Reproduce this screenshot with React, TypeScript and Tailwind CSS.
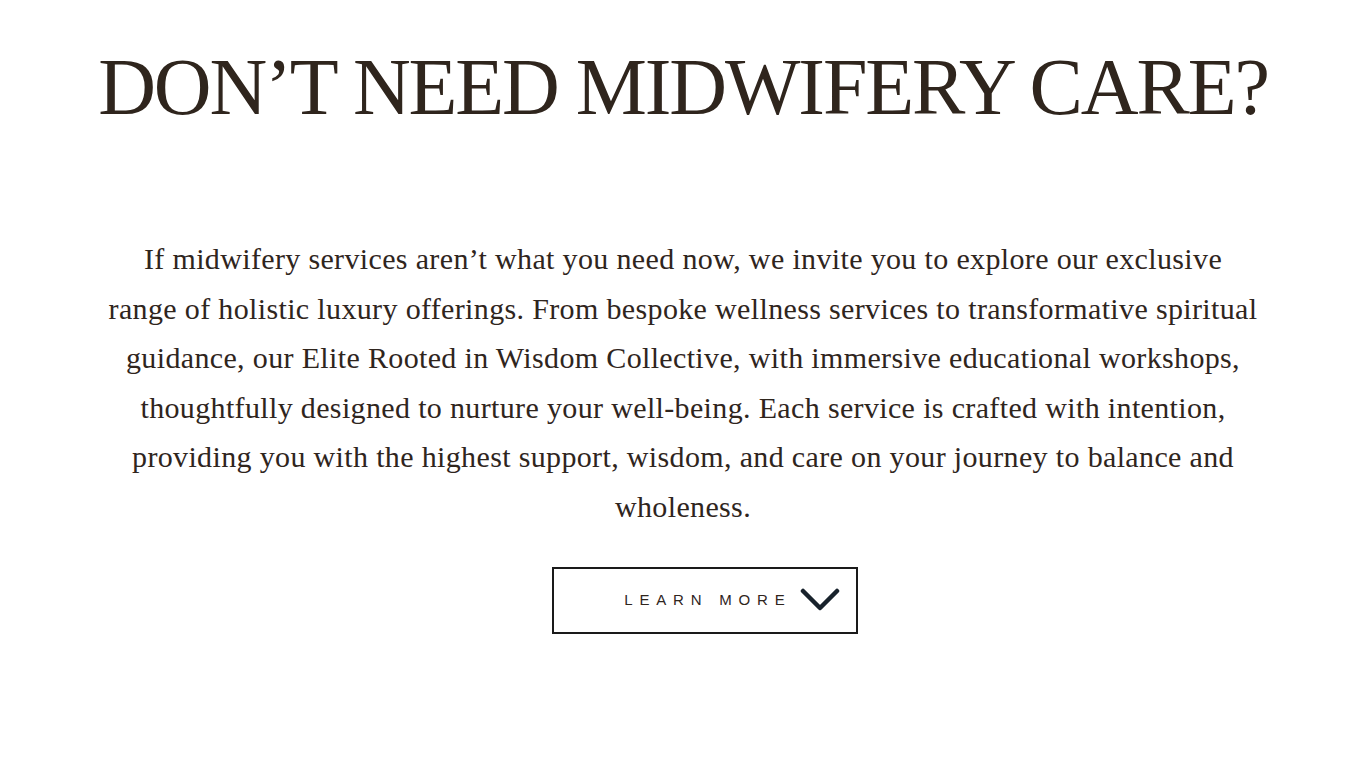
import React from "react";

const lines = [
    "If midwifery services aren’t what you need now, we invite you to explore our exclusive",
    "range of holistic luxury offerings. From bespoke wellness services to transformative spiritual",
    "guidance, our Elite Rooted in Wisdom Collective, with immersive educational workshops,",
    "thoughtfully designed to nurture your well-being. Each service is crafted with intention,",
    "providing you with the highest support, wisdom, and care on your journey to balance and",
    "wholeness.",
];

export default function App() {
    return (
        <div className="min-h-[768px] w-full bg-white flex flex-col items-center text-[#2f251d]">
            <h1 className="mt-[37px] text-[80px] leading-[100px] font-['Liberation_Serif',serif] tracking-[-2.1px] whitespace-nowrap">
                DON’T NEED MIDWIFERY CARE?
            </h1>
            <p className="mt-[97px] text-center text-[30px] leading-[49.6px] tracking-[0.35px] font-['Liberation_Serif',serif]">
                {lines.map((l, i) => (
                    <span key={i} className="block whitespace-nowrap">{l}</span>
                ))}
            </p>
            <button className="mt-[35px] ml-[43px] w-[306px] h-[67px] border-2 border-[#1a1a1a] flex items-center justify-end pr-[16px] gap-[8px]">
                <span className="text-[15px] tracking-[6.8px] font-['Liberation_Sans',sans-serif] text-[#2f251d]">
                    LEARN MORE
                </span>
                <svg width="40" height="24" viewBox="0 0 40 24" fill="none">
                    <path d="M3 3 L20 20 L37 3" stroke="#18222c" strokeWidth="4.5" strokeLinecap="round" strokeLinejoin="round" />
                </svg>
            </button>
        </div>
    );
}
